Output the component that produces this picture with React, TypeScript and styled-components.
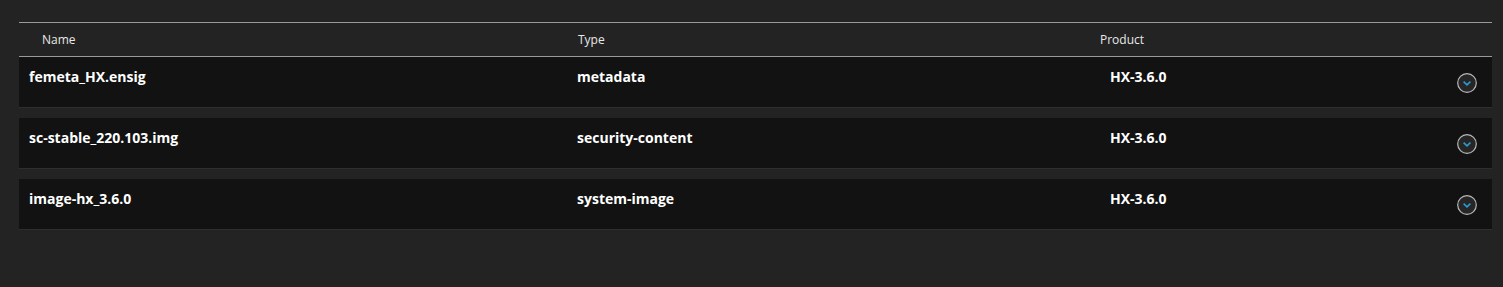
import styled, { createGlobalStyle } from 'styled-components';

interface Artifact {
  name: string;
  type: string;
  product: string;
}

const artifacts: Artifact[] = [
  { name: 'femeta_HX.ensig', type: 'metadata', product: 'HX-3.6.0' },
  { name: 'sc-stable_220.103.img', type: 'security-content', product: 'HX-3.6.0' },
  { name: 'image-hx_3.6.0', type: 'system-image', product: 'HX-3.6.0' },
];

export default function App() {
  return (
    <>
      <GlobalStyle />
      <Page>
        <Table>
          <HeaderRow>
            <HeaderCell>Name</HeaderCell>
            <HeaderCell>Type</HeaderCell>
            <HeaderCell>Product</HeaderCell>
          </HeaderRow>
          {artifacts.map(a => (
            <Row key={a.name}>
              <Cell>{a.name}</Cell>
              <Cell>{a.type}</Cell>
              <Cell>{a.product}</Cell>
              <ExpandButton aria-label="Expand">
                <svg width="20" height="20" viewBox="0 0 20 20">
                  <circle cx="10" cy="10" r="9.3" fill="#262626" stroke="#b8b8b8" strokeWidth="1.2" />
                  <path d="M6.6 8.6 L10 11.8 L13.4 8.6" fill="none" stroke="#2c9ad0" strokeWidth="1.6" />
                </svg>
              </ExpandButton>
            </Row>
          ))}
        </Table>
      </Page>
    </>
  );
}

const GlobalStyle = createGlobalStyle`
  html, body {
    margin: 0;
    padding: 0;
    background: #232323;
  }
  body {
    font-family: "Open Sans", "Noto Sans", sans-serif;
    color: #fff;
  }
`;

const Page = styled.div`
  height: 287px;
  padding: 22px 11px 0 19px;
  box-sizing: border-box;
`;

const Table = styled.div`
  display: flex;
  flex-direction: column;
`;

const HeaderRow = styled.div`
  display: grid;
  grid-template-columns: 536px 522px 1fr;
  height: 35px;
  box-sizing: border-box;
  align-items: center;
  padding-left: 23px;
  border-top: 1px solid #9a9a9a;
  border-bottom: 1px solid #9a9a9a;
`;

const HeaderCell = styled.div`
  font-size: 12px;
  color: #e8e8e8;
`;

const Row = styled.div`
  display: grid;
  grid-template-columns: 548px 533px 1fr 20px;
  height: 51px;
  box-sizing: border-box;
  padding: 0 15px 0 10px;
  margin-bottom: 10px;
  background: #121212;
  border-bottom: 1px solid #2e2e2e;
`;

const Cell = styled.div`
  padding-top: 10px;
  font-size: 14px;
  line-height: 19px;
  font-weight: 700;
  color: #fff;
`;

const ExpandButton = styled.button`
  align-self: center;
  margin-top: 2px;
  width: 20px;
  height: 20px;
  padding: 0;
  border: none;
  background: none;
  cursor: pointer;
  display: flex;

  svg {
    display: block;
  }
`;
